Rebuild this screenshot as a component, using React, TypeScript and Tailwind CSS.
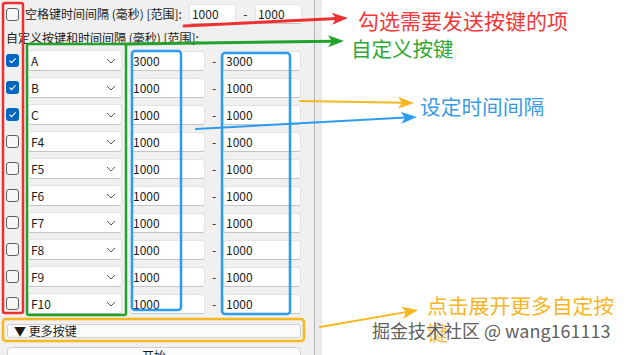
import React from "react";

const FONT = { fontFamily: '"Segoe UI", "Noto Sans CJK SC", "Noto Sans", sans-serif' };

function Check({ checked }: { checked: boolean }) {
  if (checked) {
    return (
      <div className="w-[13px] h-[13px] rounded-[3px] bg-[#0067c0] flex items-center justify-center shrink-0">
        <svg width="9" height="9" viewBox="0 0 9 9">
          <path d="M1.5 4.6 L3.6 6.6 L7.6 2.4" fill="none" stroke="#fff" strokeWidth="1.1" />
        </svg>
      </div>
    );
  }
  return <div className="w-[13px] h-[13px] rounded-[3px] border border-[#5f5f5f] bg-[#f7f7f7] shrink-0" />;
}

function Input({ value, w }: { value: string; w: string }) {
  return (
    <div className={`${w} h-[20px] bg-white border border-[#e3e3e3] border-b-[#c4c4c4] rounded-[3px] pl-[2px] flex items-center text-[12px] text-[#1a1a1a] leading-none`}>
      {value}
    </div>
  );
}

const rows: [string, boolean, string][] = [
  ["A", true, "3000"],
  ["B", true, "1000"],
  ["C", true, "1000"],
  ["F4", false, "1000"],
  ["F5", false, "1000"],
  ["F6", false, "1000"],
  ["F7", false, "1000"],
  ["F8", false, "1000"],
  ["F9", false, "1000"],
  ["F10", false, "1000"],
];

function Arrow({ x1, y1, x2, y2, color, w = 3 }: { x1: number; y1: number; x2: number; y2: number; color: string; w?: number }) {
  const dx = x2 - x1;
  const dy = y2 - y1;
  const len = Math.sqrt(dx * dx + dy * dy);
  const ux = dx / len;
  const uy = dy / len;
  const hl = 16;
  const hw = 6;
  const bx = x2 - ux * hl;
  const by = y2 - uy * hl;
  const nx = -uy;
  const ny = ux;
  const pts = `${x2},${y2} ${bx + nx * hw},${by + ny * hw} ${bx + ux * 4},${by + uy * 4} ${bx - nx * hw},${by - ny * hw}`;
  return (
    <g>
      <line x1={x1} y1={y1} x2={bx + ux * 5} y2={by + uy * 5} stroke={color} strokeWidth={w} strokeLinecap="round" />
      <polygon points={pts} fill={color} />
    </g>
  );
}

export default function App() {
  return (
    <div className="relative w-[626px] h-[355px] overflow-hidden bg-white" style={FONT}>
      <div className="flex h-full">
        <div className="w-[314px] h-full bg-[#f0f0f0] flex flex-col pl-[6px] pr-[12px] pt-[4px] text-[12px] text-[#1a1a1a]">
          <div className="flex items-center h-[20px]">
            <Check checked={false} />
            <span className="ml-[6px] whitespace-nowrap">空格键时间间隔 (毫秒) [范围]:</span>
            <div className="ml-[7px]"><Input value="1000" w="w-[47px]" /></div>
            <span className="w-[19px] text-center">-</span>
            <Input value="1000" w="w-[47px]" />
          </div>
          <div className="mt-[5px] h-[17px] leading-[17px] whitespace-nowrap">自定义按键和时间间隔 (毫秒) [范围]:</div>
          <div className="mt-[4px] flex flex-col gap-[6px]">
            {rows.map(([k, c, v]) => (
              <div key={k} className="flex items-center h-[21px]">
                <Check checked={c} />
                <div className="ml-[9px] w-[94px] h-[21px] bg-white border border-[#e3e3e3] border-b-[#c4c4c4] rounded-[3px] flex items-center justify-between pl-[2px] pr-[5px]">
                  <span>{k}</span>
                  <svg width="10" height="6" viewBox="0 0 10 6">
                    <path d="M1 1 L5 5 L9 1" fill="none" stroke="#555" strokeWidth="1" />
                  </svg>
                </div>
                <div className="ml-[8px]"><Input value={v} w="w-[75px]" /></div>
                <span className="w-[18px] text-center">-</span>
                <Input value={v} w="w-[78px]" />
              </div>
            ))}
          </div>
          <div className="mt-[10px] ml-[1px] w-[294px] h-[15px] bg-[#fbfbfb] border border-[#d0d0d0] rounded-[3px] flex items-center pl-[6px] text-[12px] leading-none">
            ▼ 更多按键
          </div>
          <div className="mt-[9px] ml-[1px] w-[294px] h-[24px] shrink-0 bg-[#fbfbfb] border border-[#d0d0d0] rounded-[4px] flex justify-center pt-[1px] text-[12px] leading-[14px]">
            开始
          </div>
        </div>
        <div className="w-[1px] h-full bg-[#b4b4b4]" />
        <div className="w-[7px] h-full bg-[#ebebeb]" />
        <div className="flex-1 h-full bg-white" />
      </div>

      <svg className="absolute inset-0 pointer-events-none" width="626" height="355" viewBox="0 0 626 355">
        <rect x="3" y="3" width="20" height="310" rx="2" fill="none" stroke="#ee3030" strokeWidth="2.5" />
        <rect x="27" y="44" width="99" height="271" rx="2" fill="none" stroke="#22a22a" strokeWidth="2.5" />
        <rect x="132" y="51" width="49" height="259" rx="3" fill="none" stroke="#2c9cf2" strokeWidth="2.5" />
        <rect x="222" y="53" width="68" height="261" rx="3" fill="none" stroke="#2c9cf2" strokeWidth="2.5" />
        <rect x="3" y="319" width="301" height="22" rx="3" fill="none" stroke="#f6b81e" strokeWidth="2.5" />
        <Arrow x1={184} y1={26} x2={348} y2={18} color="#ee3030" />
        <Arrow x1={127} y1={44} x2={344} y2={41} color="#22a22a" />
        <Arrow x1={300} y1={101} x2={414} y2={103} color="#f6b81e" w={2} />
        <Arrow x1={196} y1={129} x2={417} y2={117} color="#2c9cf2" w={2} />
        <Arrow x1={320} y1={327} x2={418} y2={310} color="#f6b81e" w={2} />
      </svg>

      <div className="absolute left-[358px] top-[6px] text-[21px] leading-[28px] text-[#f03a3a] whitespace-nowrap" style={{ fontFamily: '"Noto Sans CJK SC", sans-serif' }}>
        勾选需要发送按键的项
      </div>
      <div className="absolute left-[351px] top-[34px] text-[20.5px] leading-[28px] text-[#2ea836] whitespace-nowrap" style={{ fontFamily: '"Noto Sans CJK SC", sans-serif' }}>
        自定义按键
      </div>
      <div className="absolute left-[420px] top-[92px] text-[20.7px] leading-[28px] text-[#3a9ae6] whitespace-nowrap" style={{ fontFamily: '"Noto Sans CJK SC", sans-serif' }}>
        设定时间间隔
      </div>
      <div className="absolute left-[427px] top-[292px] w-[195px] text-[20.8px] leading-[27px] text-[#f7b526]" style={{ fontFamily: '"Noto Sans CJK SC", sans-serif' }}>
        点击展开更多自定按键
      </div>
      <div
        className="absolute left-[372px] top-[318px] text-[18px] leading-[24px] text-[#606060] whitespace-nowrap"
        style={{ fontFamily: '"Noto Sans CJK SC", "Noto Sans", sans-serif', textShadow: "0 0 2px #fff, 0 0 2px #fff, 0 0 1px #fff" }}
      >
        掘金技术社区 @ wang161113
      </div>
    </div>
  );
}
